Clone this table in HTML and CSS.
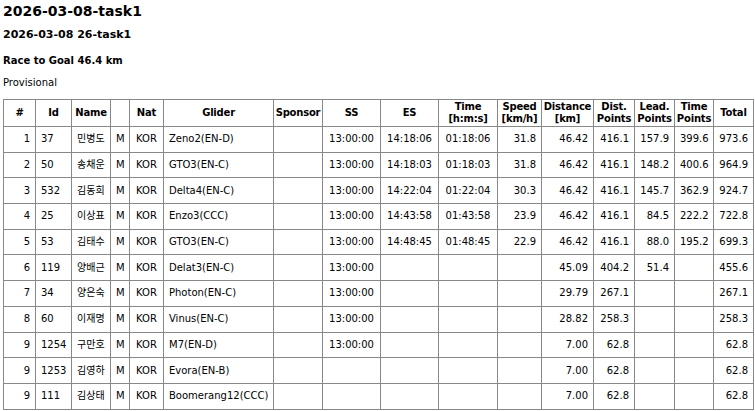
FILE: index.html
```html
<!DOCTYPE html>
<html>
<head>
<meta charset="utf-8">
<title>2026-03-08-task1</title>
<link rel="stylesheet" href="styles.css">
</head>
<body>
<h1 class="title">2026-03-08-task1</h1>
<h2 class="subtitle">2026-03-08 26-task1</h2>
<h3 class="task">Race to Goal 46.4 km</h3>
<p class="status">Provisional</p>
<table class="results">
  <colgroup>
    <col class="c-rank"><col class="c-id"><col class="c-name"><col class="c-sex"><col class="c-nat">
    <col class="c-glider"><col class="c-sponsor"><col class="c-ss"><col class="c-es"><col class="c-time">
    <col class="c-speed"><col class="c-dist"><col class="c-dp"><col class="c-lp"><col class="c-tp"><col class="c-total">
  </colgroup>
  <thead>
    <tr>
      <th>#</th><th>Id</th><th>Name</th><th></th><th>Nat</th><th>Glider</th><th>Sponsor</th><th>SS</th><th>ES</th>
      <th>Time<br>[h:m:s]</th><th>Speed<br>[km/h]</th><th>Distance<br>[km]</th><th>Dist.<br>Points</th><th>Lead.<br>Points</th><th>Time<br>Points</th><th>Total</th>
    </tr>
  </thead>
  <tbody>
    <tr><td class="r">1</td><td class="l">37</td><td class="l">민병도</td><td class="c">M</td><td class="c">KOR</td><td class="l">Zeno2(EN-D)</td><td></td><td class="c">13:00:00</td><td class="c">14:18:06</td><td class="c">01:18:06</td><td class="r">31.8</td><td class="r">46.42</td><td class="r">416.1</td><td class="r">157.9</td><td class="r">399.6</td><td class="r">973.6</td></tr>
    <tr><td class="r">2</td><td class="l">50</td><td class="l">송채운</td><td class="c">M</td><td class="c">KOR</td><td class="l">GTO3(EN-C)</td><td></td><td class="c">13:00:00</td><td class="c">14:18:03</td><td class="c">01:18:03</td><td class="r">31.8</td><td class="r">46.42</td><td class="r">416.1</td><td class="r">148.2</td><td class="r">400.6</td><td class="r">964.9</td></tr>
    <tr><td class="r">3</td><td class="l">532</td><td class="l">김동희</td><td class="c">M</td><td class="c">KOR</td><td class="l">Delta4(EN-C)</td><td></td><td class="c">13:00:00</td><td class="c">14:22:04</td><td class="c">01:22:04</td><td class="r">30.3</td><td class="r">46.42</td><td class="r">416.1</td><td class="r">145.7</td><td class="r">362.9</td><td class="r">924.7</td></tr>
    <tr><td class="r">4</td><td class="l">25</td><td class="l">이상표</td><td class="c">M</td><td class="c">KOR</td><td class="l">Enzo3(CCC)</td><td></td><td class="c">13:00:00</td><td class="c">14:43:58</td><td class="c">01:43:58</td><td class="r">23.9</td><td class="r">46.42</td><td class="r">416.1</td><td class="r">84.5</td><td class="r">222.2</td><td class="r">722.8</td></tr>
    <tr><td class="r">5</td><td class="l">53</td><td class="l">김태수</td><td class="c">M</td><td class="c">KOR</td><td class="l">GTO3(EN-C)</td><td></td><td class="c">13:00:00</td><td class="c">14:48:45</td><td class="c">01:48:45</td><td class="r">22.9</td><td class="r">46.42</td><td class="r">416.1</td><td class="r">88.0</td><td class="r">195.2</td><td class="r">699.3</td></tr>
    <tr><td class="r">6</td><td class="l">119</td><td class="l">양배근</td><td class="c">M</td><td class="c">KOR</td><td class="l">Delat3(EN-C)</td><td></td><td class="c">13:00:00</td><td></td><td></td><td></td><td class="r">45.09</td><td class="r">404.2</td><td class="r">51.4</td><td></td><td class="r">455.6</td></tr>
    <tr><td class="r">7</td><td class="l">34</td><td class="l">양은숙</td><td class="c">M</td><td class="c">KOR</td><td class="l">Photon(EN-C)</td><td></td><td class="c">13:00:00</td><td></td><td></td><td></td><td class="r">29.79</td><td class="r">267.1</td><td></td><td></td><td class="r">267.1</td></tr>
    <tr><td class="r">8</td><td class="l">60</td><td class="l">이재명</td><td class="c">M</td><td class="c">KOR</td><td class="l">Vinus(EN-C)</td><td></td><td class="c">13:00:00</td><td></td><td></td><td></td><td class="r">28.82</td><td class="r">258.3</td><td></td><td></td><td class="r">258.3</td></tr>
    <tr><td class="r">9</td><td class="l">1254</td><td class="l">구만호</td><td class="c">M</td><td class="c">KOR</td><td class="l">M7(EN-D)</td><td></td><td class="c">13:00:00</td><td></td><td></td><td></td><td class="r">7.00</td><td class="r">62.8</td><td></td><td></td><td class="r">62.8</td></tr>
    <tr><td class="r">9</td><td class="l">1253</td><td class="l">김영하</td><td class="c">M</td><td class="c">KOR</td><td class="l">Evora(EN-B)</td><td></td><td></td><td></td><td></td><td></td><td class="r">7.00</td><td class="r">62.8</td><td></td><td></td><td class="r">62.8</td></tr>
    <tr><td class="r">9</td><td class="l">111</td><td class="l">김상태</td><td class="c">M</td><td class="c">KOR</td><td class="l">Boomerang12(CCC)</td><td></td><td></td><td></td><td></td><td></td><td class="r">7.00</td><td class="r">62.8</td><td></td><td></td><td class="r">62.8</td></tr>
  </tbody>
</table>
</body>
</html>
```
FILE: styles.css
```css
html, body {
  margin: 0;
  padding: 0;
  background: #ffffff;
}
body {
  padding: 0 3px;
  font-family: "DejaVu Sans", Verdana, "Noto Sans CJK KR", sans-serif;
  color: #000;
}
.title {
  margin: 2px 0 0;
  font-size: 14px;
  line-height: 18px;
  font-weight: bold;
}
.subtitle {
  margin: 8px 0 0;
  font-size: 11px;
  line-height: 14px;
  font-weight: bold;
}
.task {
  margin: 13px 0 0;
  font-size: 10px;
  line-height: 12px;
  font-weight: bold;
}
.status {
  margin: 10px 0 0;
  font-size: 10px;
  line-height: 12px;
}
.results {
  margin-top: 10px;
  border-collapse: collapse;
  table-layout: fixed;
  width: 751px;
  font-size: 10px;
  line-height: 12px;
}
.results th,
.results td {
  border: 1px solid #888;
  padding: 0 5px;
  white-space: nowrap;
  overflow: hidden;
}
.results th {
  padding: 0 1px;
  font-weight: bold;
  text-align: center;
  vertical-align: middle;
  letter-spacing: -0.2px;
}
.results thead tr { height: 27px; }
.results tbody tr { height: 25.7px; }
.results td { vertical-align: middle; }
.results td.l { text-align: left; }
.results td.r { text-align: right; }
.results td.c { text-align: center; }
.c-rank { width: 32px; }
.c-id { width: 36px; }
.c-name { width: 39px; }
.c-sex { width: 19px; }
.c-nat { width: 34px; }
.c-glider { width: 110px; }
.c-sponsor { width: 49px; }
.c-ss { width: 58px; }
.c-es { width: 58px; }
.c-time { width: 59px; }
.c-speed { width: 44px; }
.c-dist { width: 52px; }
.c-dp { width: 41px; }
.c-lp { width: 40px; }
.c-tp { width: 39px; }
.c-total { width: 40px; }
```
